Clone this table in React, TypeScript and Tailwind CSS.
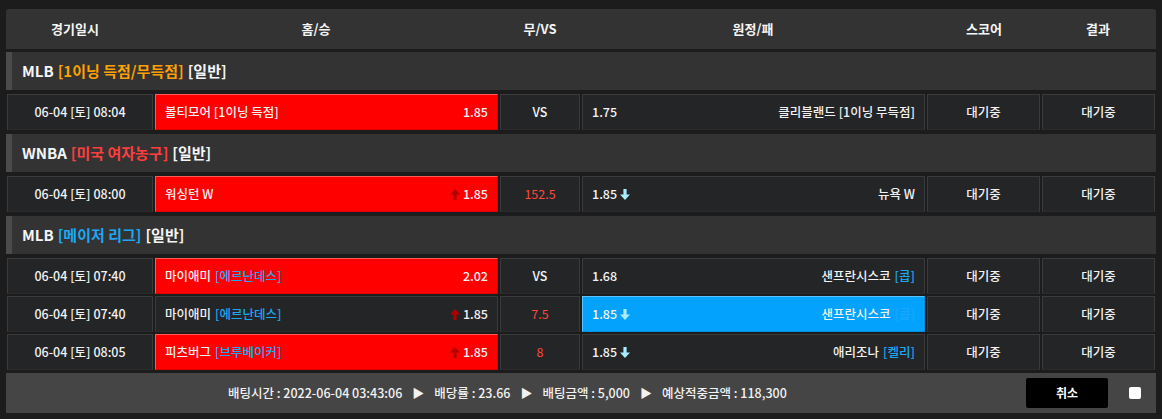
import React from 'react';

const font = { fontFamily: '"Noto Sans CJK KR", "Noto Sans", sans-serif' };

interface Game {
  date: string;
  home: string;
  homeTag?: string;
  homeOdds: string;
  homeUp?: boolean;
  homeSel?: boolean;
  mid: string;
  midRed?: boolean;
  awayOdds: string;
  awayDown?: boolean;
  away: string;
  awayTag?: string;
  awaySel?: boolean;
}

interface Group {
  league: string;
  tag: string;
  tagColor: string;
  games: Game[];
}

const groups: Group[] = [
  {
    league: 'MLB',
    tag: '[1이닝 득점/무득점]',
    tagColor: 'text-[#ffa000]',
    games: [
      { date: '06-04 [토] 08:04', home: '볼티모어 [1이닝 득점]', homeOdds: '1.85', homeSel: true, mid: 'VS', awayOdds: '1.75', away: '클리블랜드 [1이닝 무득점]' },
    ],
  },
  {
    league: 'WNBA',
    tag: '[미국 여자농구]',
    tagColor: 'text-[#ff3d3d]',
    games: [
      { date: '06-04 [토] 08:00', home: '워싱턴 W', homeOdds: '1.85', homeUp: true, homeSel: true, mid: '152.5', midRed: true, awayOdds: '1.85', awayDown: true, away: '뉴욕 W' },
    ],
  },
  {
    league: 'MLB',
    tag: '[메이저 리그]',
    tagColor: 'text-[#1ca8f2]',
    games: [
      { date: '06-04 [토] 07:40', home: '마이애미', homeTag: '[에르난데스]', homeOdds: '2.02', homeSel: true, mid: 'VS', awayOdds: '1.68', away: '샌프란시스코', awayTag: '[콥]' },
      { date: '06-04 [토] 07:40', home: '마이애미', homeTag: '[에르난데스]', homeOdds: '1.85', homeUp: true, mid: '7.5', midRed: true, awayOdds: '1.85', awayDown: true, away: '샌프란시스코', awayTag: '[콥]', awaySel: true },
      { date: '06-04 [토] 08:05', home: '피츠버그', homeTag: '[브루베이커]', homeOdds: '1.85', homeUp: true, homeSel: true, mid: '8', midRed: true, awayOdds: '1.85', awayDown: true, away: '애리조나', awayTag: '[켈리]' },
    ],
  },
];

const UpArrow = () => (
  <svg width="10" height="11" viewBox="0 0 10 11" className="mr-[3px]">
    <path d="M5 0 L10 5.5 L6.6 5.5 L6.6 11 L3.4 11 L3.4 5.5 L0 5.5 Z" fill="#b00000" />
  </svg>
);

const DownArrow = () => (
  <svg width="10" height="11" viewBox="0 0 10 11" className="ml-[3px]">
    <path d="M3.4 0 L6.6 0 L6.6 5.5 L10 5.5 L5 11 L0 5.5 L3.4 5.5 Z" fill="#a8ecff" />
  </svg>
);

const cellBase = 'h-full flex items-center border border-[#3a3b3d] border-b-[#2a2b2d]';
const darkCell = `${cellBase} bg-[#242527]`;

function Row({ g, first }: { g: Game; first: boolean }) {
  return (
    <div className={`flex gap-[2px] px-[1px] h-[36px] text-[12.5px] font-medium text-[#f2f2f2] ${first ? 'mt-[4px]' : 'mt-[2px]'}`}>
      <div className={`${darkCell} w-[146px] justify-center`}>{g.date}</div>
      <div
        className={`${cellBase} w-[343px] justify-between px-[9px] ${
          g.homeSel ? 'bg-[#ff0000] border-[#ff5a5a] border-b-[#e00000] border-r-[#e00000]' : 'bg-[#242527]'
        }`}
      >
        <span>
          {g.home}
          {g.homeTag && <span className="text-[#1ca8f2] ml-[4px]">{g.homeTag}</span>}
        </span>
        <span className="flex items-center">
          {g.homeUp && <UpArrow />}
          {g.homeOdds}
        </span>
      </div>
      <div className={`${darkCell} w-[80px] justify-center ${g.midRed ? 'text-[#ff4a3a] font-normal' : ''}`}>{g.mid}</div>
      <div
        className={`${cellBase} w-[343px] justify-between px-[9px] ${
          g.awaySel ? 'bg-[#03a2fc] border-[#5cc4ff] border-b-[#0090e0] border-r-[#0090e0]' : 'bg-[#242527]'
        }`}
      >
        <span className="flex items-center">
          {g.awayOdds}
          {g.awayDown && <DownArrow />}
        </span>
        <span>
          {g.away}
          {g.awayTag && <span className={`ml-[4px] ${g.awaySel ? 'text-[#1aa6ff]' : 'text-[#1ca8f2]'}`}>{g.awayTag}</span>}
        </span>
      </div>
      <div className={`${darkCell} w-[113px] justify-center`}>대기중</div>
      <div className={`${darkCell} w-[113px] justify-center`}>대기중</div>
    </div>
  );
}

export default function App() {
  return (
    <div style={font} className="w-[1162px] h-[419px] bg-[#1c1c1c] pt-[9px] pl-[6px] pr-[6px] overflow-hidden">
      <div className="w-[1150px]">
        {/* header */}
        <div className="flex h-[40px] bg-[#333333] rounded-t-[3px] text-[13px] font-bold text-[#f5f5f5] items-center">
          <div className="w-[138px] text-center">경기일시</div>
          <div className="w-[344px] text-center">홈/승</div>
          <div className="w-[104px] text-center">무/VS</div>
          <div className="w-[322px] text-center">원정/패</div>
          <div className="w-[140px] text-center">스코어</div>
          <div className="w-[88px] text-center">결과</div>
        </div>

        {groups.map((grp, gi) => (
          <div key={gi}>
            <div className={`h-[38px] ${gi === 0 ? 'mt-[3px]' : 'mt-[4px]'} bg-[#333333] border-l-[6px] border-[#4b4b4b] flex items-center pl-[10px] text-[15px] font-bold text-[#f5f5f5]`}>
              <span>{grp.league}</span>
              <span className={`ml-[4px] ${grp.tagColor}`}>{grp.tag}</span>
              <span className="ml-[4px]">[일반]</span>
            </div>
            {grp.games.map((g, i) => (
              <Row key={i} g={g} first={i === 0} />
            ))}
          </div>
        ))}

        {/* footer */}
        <div className="mt-[3px] h-[40px] bg-[#454545] flex items-center text-[12.5px] font-medium text-[#f2f2f2]">
          <div className="pl-[222px] flex items-center gap-[10px] whitespace-nowrap">
            <span>배팅시간 : 2022-06-04 03:43:06</span>
            <span className="text-[12px]">▶</span>
            <span>배당률 : 23.66</span>
            <span className="text-[12px]">▶</span>
            <span>배팅금액 : 5,000</span>
            <span className="text-[12px]">▶</span>
            <span>예상적중금액 : 118,300</span>
          </div>
          <button className="ml-auto w-[82px] h-[30px] bg-black rounded-[2px] text-white text-[12px] font-bold">취소</button>
          <div className="ml-[21px] mr-[15px] w-[12px] h-[12px] bg-white rounded-[2px]" />
        </div>
      </div>
    </div>
  );
}
